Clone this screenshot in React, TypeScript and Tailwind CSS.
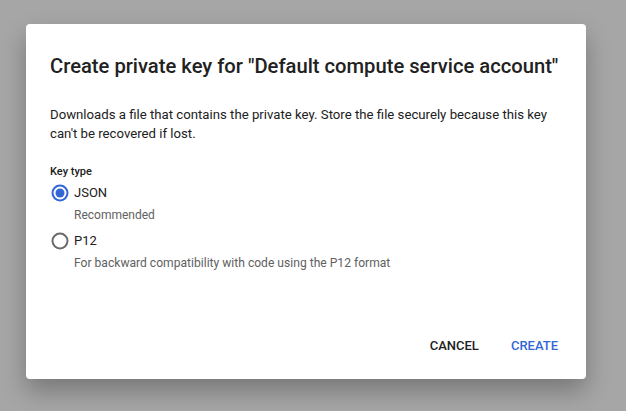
import React, { useState } from 'react';

const Radio: React.FC<{ checked: boolean; onClick: () => void }> = ({ checked, onClick }) => (
  <button onClick={onClick} className="flex h-5 w-5 items-center justify-center">
    <svg width="18" height="18" viewBox="0 0 18 18">
      <circle cx="9" cy="9" r="7.5" fill="none" stroke={checked ? '#3367d6' : '#6b6b6b'} strokeWidth="2" />
      {checked && <circle cx="9" cy="9" r="4.5" fill="#3367d6" />}
    </svg>
  </button>
);

const App: React.FC = () => {
  const [keyType, setKeyType] = useState<'json' | 'p12'>('json');

  return (
    <div
      className="flex h-[411px] w-[626px] items-start justify-start bg-[#a6a6a6] pl-[26px] pt-[24px]"
      style={{ fontFamily: 'Roboto, "Liberation Sans", sans-serif' }}
    >
      <div className="flex h-[355px] w-[560px] flex-col rounded-[4px] bg-white pl-[24px] pr-[28px] shadow-[0_12px_24px_rgba(0,0,0,0.28)]">
        <h1 className="mt-[30px] text-[20.2px] leading-[24px] font-medium whitespace-nowrap text-[#212121]">
          Create private key for "Default compute service account"
        </h1>
        <p className="mt-[27px] text-[13.2px] leading-[19px] text-[#212121]">
          Downloads a file that contains the private key. Store the file securely because this key can't be recovered
          if lost.
        </p>

        <div className="mt-[21px] text-[11px] leading-[16px] font-medium text-[#212121]">Key type</div>

        <div className="mt-[3px] flex items-center gap-[4px]">
          <Radio checked={keyType === 'json'} onClick={() => setKeyType('json')} />
          <span className="text-[13px] leading-[20px] text-[#212121]">JSON</span>
        </div>
        <div className="mt-[3px] pl-[24px] text-[12px] leading-[18px] text-[#616161]">Recommended</div>

        <div className="mt-[7px] flex items-center gap-[4px]">
          <Radio checked={keyType === 'p12'} onClick={() => setKeyType('p12')} />
          <span className="text-[13px] leading-[20px] text-[#212121]">P12</span>
        </div>
        <div className="mt-[3px] pl-[24px] text-[12.1px] leading-[18px] text-[#616161]">
          For backward compatibility with code using the P12 format
        </div>

        <div className="mt-auto mb-[25px] flex justify-end gap-[32px]">
          <button className="text-[13px] leading-[16px] font-medium text-[#212121]">CANCEL</button>
          <button className="text-[13px] leading-[16px] font-medium text-[#3367d6]">CREATE</button>
        </div>
      </div>
    </div>
  );
};

export default App;
